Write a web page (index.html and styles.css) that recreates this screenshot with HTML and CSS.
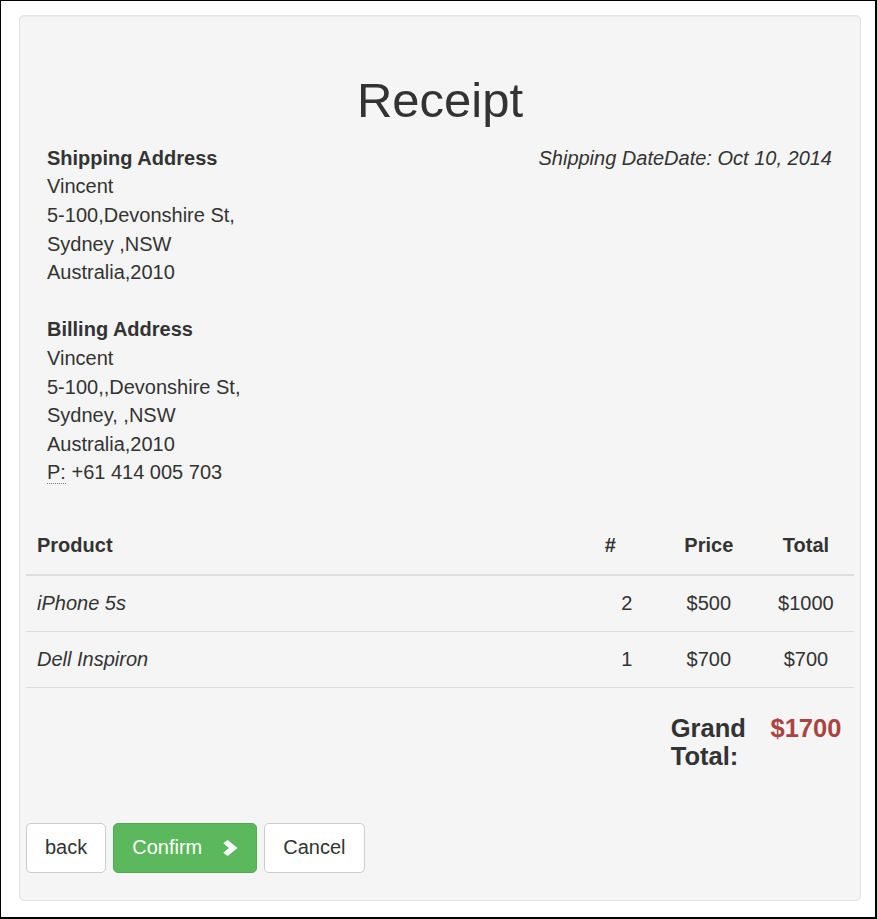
FILE: index.html
```html
<!DOCTYPE html>
<html lang="en">
<head>
<meta charset="utf-8">
<title>Receipt</title>
<link rel="stylesheet" href="styles.css">
</head>
<body>
<div class="frame">
  <div class="well">
    <h1 class="title">Receipt</h1>
    <div class="info">
      <div class="addresses">
        <address class="address">
          <strong>Shipping Address</strong><br>
          Vincent<br>
          5-100,Devonshire St,<br>
          Sydney ,NSW<br>
          Australia,2010
        </address>
        <address class="address">
          <strong>Billing Address</strong><br>
          Vincent<br>
          5-100,,Devonshire St,<br>
          Sydney, ,NSW<br>
          Australia,2010<br>
          <abbr class="abbr" title="Phone">P:</abbr> +61 414 005 703
        </address>
      </div>
      <div class="date"><em>Shipping DateDate: Oct 10, 2014</em></div>
    </div>
    <table class="items">
      <colgroup>
        <col class="c-product">
        <col class="c-qty">
        <col class="c-price">
        <col class="c-total">
      </colgroup>
      <thead>
        <tr>
          <th>Product</th>
          <th>#</th>
          <th class="center">Price</th>
          <th class="center">Total</th>
        </tr>
      </thead>
      <tbody>
        <tr>
          <td><em>iPhone 5s</em></td>
          <td class="qty">2</td>
          <td class="center">$500</td>
          <td class="center">$1000</td>
        </tr>
        <tr>
          <td><em>Dell Inspiron</em></td>
          <td class="qty">1</td>
          <td class="center">$700</td>
          <td class="center">$700</td>
        </tr>
        <tr class="grand">
          <td></td>
          <td></td>
          <td><h4 class="h4"><strong>Grand Total:</strong></h4></td>
          <td class="center danger"><h4 class="h4"><strong>$1700</strong></h4></td>
        </tr>
      </tbody>
    </table>
    <div class="actions">
      <button type="button" class="btn btn-default">back</button>
      <button type="button" class="btn btn-success">Confirm<svg class="chev" width="15" height="16" viewBox="0 0 15 16" aria-hidden="true"><polygon points="0.3,3.2 4.6,0 14.5,8 4.6,16 0.3,12.8 6,8" fill="#fff"/></svg></button>
      <button type="button" class="btn btn-default">Cancel</button>
    </div>
  </div>
</div>
</body>
</html>
```
FILE: styles.css
```css
* { box-sizing: border-box; }
html, body { margin: 0; padding: 0; background: #fff; }
body {
  font-family: "Liberation Sans", Arial, Helvetica, sans-serif;
  font-size: 20px;
  line-height: 28.6px;
  color: #333;
}
.frame {
  width: 877px;
  height: 919px;
  border: 1px solid #000;
  border-right-width: 2px;
  border-bottom-width: 2px;
  background: #fff;
  padding: 14px 0 0 18px;
}
.well {
  width: 842px;
  height: 886px;
  background: #f5f5f5;
  border: 1px solid #e3e3e3;
  border-radius: 5px;
  box-shadow: inset 0 1px 1px rgba(0,0,0,.05);
  padding: 27px 6px 27px 6px;
}
.title {
  margin: 31px 0 16px;
  font-size: 49px;
  line-height: 1.1;
  font-weight: 500;
  text-align: center;
  color: #333;
}
.info {
  display: flex;
  justify-content: space-between;
  align-items: flex-start;
  padding: 0 22px 0 21px;
}
.address {
  font-style: normal;
  margin: 0 0 28.6px;
}
.abbr {
  text-decoration: none;
  border-bottom: 1px dotted #777;
  cursor: help;
}
.date em { font-style: italic; }
.items {
  width: 100%;
  border-collapse: collapse;
  table-layout: fixed;
  margin-bottom: 27.6px;
}
.c-product { width: 567px; }
.c-qty { width: 66px; }
.c-price { width: 98px; }
.c-total { width: 96px; }
.items th {
  text-align: left;
  font-weight: bold;
  padding: 15.7px 11px 13.7px;
  border-bottom: 2px solid #ddd;
}
.items td {
  padding: 13.4px 11px;
  border-top: 1px solid #ddd;
  vertical-align: top;
}
.items .center { text-align: center; }
.items .qty { text-align: center; }
.items .grand td { padding-top: 11.4px; padding-bottom: 11.4px; }
.h4 {
  margin: 14px 0;
  font-size: 25.5px;
  line-height: 1.1;
  font-weight: 500;
}
.danger { color: #a94442; }
.actions {
  display: flex;
  gap: 7px;
}
.btn {
  display: inline-flex;
  align-items: center;
  font-family: inherit;
  font-size: 20px;
  line-height: 28.6px;
  padding: 9.6px 18px;
  border: 1px solid transparent;
  border-radius: 5px;
  cursor: pointer;
}
.btn-default {
  color: #333;
  background: #fff;
  border-color: #ccc;
}
.btn-success {
  color: #fff;
  background: #5cb85c;
  border-color: #4cae4c;
}
.chev { margin-left: 21px; display: block; }
```
